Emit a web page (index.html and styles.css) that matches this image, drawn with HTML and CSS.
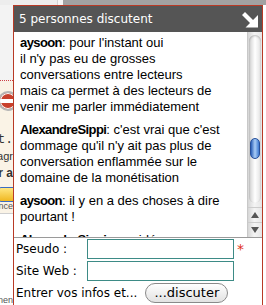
FILE: index.html
```html
<!DOCTYPE html>
<html lang="fr">
<head>
<meta charset="utf-8">
<title>Chat</title>
<link rel="stylesheet" href="styles.css">
</head>
<body>
<div class="page">
  <div class="top">
    <div class="top-light"></div>
    <div class="top-sep"></div>
    <div class="top-gray"></div>
  </div>
  <div class="side">
    <div class="side-top"></div>
    <div class="side-box">
      <div class="side-row logo-row"><span class="logo"></span></div>
      <div class="side-row mono">Net.</div>
      <div class="side-row small">magr</div>
      <div class="side-row strong">ur a</div>
      <div class="side-row btn-row"><span class="mini-btn"></span></div>
      <div class="side-row tiny">ance</div>
    </div>
    <div class="side-bottom"><span class="tiny">nen</span></div>
  </div>
</div>

<div class="widget">
  <div class="header">
    <span class="title">5 personnes discutent</span>
    <svg class="arrow" width="17" height="16" viewBox="0 0 17 16">
      <path d="M0 3 L3 0 L11 8 L16 3 L16 15.5 L3.5 15.5 L8 11 Z" fill="#fff"/>
    </svg>
  </div>
  <div class="body">
    <div class="messages">
      <p class="msg"><b>aysoon</b>: pour l'instant oui<br>il n'y pas eu de grosses<br>conversations entre lecteurs<br>mais ca permet à des lecteurs de<br>venir me parler immédiatement</p>
      <p class="msg"><b>AlexandreSippi</b>: c'est vrai que c'est<br>dommage qu'il n'y ait pas plus de<br>conversation enflammée sur le<br>domaine de la monétisation</p>
      <p class="msg"><b>aysoon</b>: il y en a des choses à dire<br>pourtant !</p>
      <p class="msg"><b>AlexandreSippi</b>: une idée comme ca :</p>
    </div>
    <div class="scrollbar">
      <div class="track">
        <div class="thumb"></div>
      </div>
      <div class="sb-btn up"><span class="tri-up"></span></div>
      <div class="sb-btn down"><span class="tri-down"></span></div>
    </div>
  </div>
  <form class="form">
    <label class="lbl" for="pseudo">Pseudo :</label>
    <input class="field" id="pseudo" type="text">
    <span class="req">*</span>
    <label class="lbl" for="site">Site Web :</label>
    <input class="field" id="site" type="text">
    <span></span>
    <div class="actions">
      <span class="hint">Entrer vos infos et...</span>
      <button class="btn" type="button">...discuter</button>
    </div>
  </form>
</div>
</body>
</html>
```

FILE: styles.css
```css
html, body {
  margin: 0;
  padding: 0;
}
body {
  width: 266px;
  height: 305px;
  overflow: hidden;
  position: relative;
  background: #ffffff;
  font-family: "Liberation Sans", Arial, sans-serif;
}

/* background page */
.page {
  display: flex;
  flex-direction: column;
  height: 305px;
}
.top {
  display: flex;
  height: 5px;
}
.top-light { width: 57px; background: #ededed; }
.top-sep { width: 6px; background: #f6f6f6; border-left: 1px solid #d4d4d4; box-sizing: border-box; }
.top-gray { flex: 1; background: #a2a2a2; }

.side {
  width: 13px;
  flex: 1;
  display: flex;
  flex-direction: column;
  overflow: hidden;
}
.side-top {
  height: 75px;
  background: #f3f3f3;
  border-bottom: 1px dotted #d04040;
}
.side-box {
  height: 132px;
  background: #faf3e6;
  border-bottom: 1px solid #cfcfcf;
  display: flex;
  flex-direction: column;
}
.side-row {
  display: flex;
  justify-content: flex-end;
  white-space: nowrap;
  font-size: 11px;
  color: #333;
}
.logo-row { height: 51px; align-items: flex-start; }
.logo {
  flex: none;
  width: 16px;
  height: 16px;
  margin-top: 10px;
  border-radius: 50%;
  border: 2px solid #b5b5b5;
  box-shadow: inset 0 0 0 1px #ffffff;
  background: linear-gradient(#c8402c 0 6px, #ffffff 6px 10px, #c8402c 10px);
  margin-right: -5px;
}
.mono { font-family: "Liberation Mono", monospace; font-size: 13px; height: 16px; line-height: 16px; }
.small { height: 17px; line-height: 17px; font-size: 11px; }
.strong { font-weight: bold; font-size: 12px; height: 16px; line-height: 16px; }
.btn-row { height: 20px; }
.mini-btn {
  flex: none;
  width: 16px;
  height: 13px;
  margin-right: -3px;
  margin-top: 6px;
  border-radius: 3px;
  border: 1px solid #3c6cc0;
  background: linear-gradient(#ffe680, #f0b820);
}
.tiny { font-size: 9px; height: 10px; line-height: 10px; color: #555; }
.side-bottom {
  flex: 1;
  display: flex;
  justify-content: flex-end;
  align-items: flex-end;
}

/* widget */
.widget {
  position: absolute;
  left: 13px;
  top: 5px;
  width: 248px;
  height: 310px;
  border: 1px solid #b83a26;
  background: #ffffff;
  display: flex;
  flex-direction: column;
}
.header {
  height: 26px;
  flex: none;
  background: #555555;
  color: #ffffff;
  display: flex;
  align-items: center;
  justify-content: space-between;
  padding: 0 3px 0 5px;
}
.title {
  font-family: "DejaVu Sans", Verdana, sans-serif;
  font-size: 12px;
}
.arrow { display: block; margin-top: 1px; }

.body {
  height: 205px;
  flex: none;
  display: flex;
}
.messages {
  flex: 1;
  overflow: hidden;
  padding: 3px 0 0 6px;
  font-size: 13px;
  line-height: 16px;
  color: #000;
}
.msg { margin: 0 0 7px; white-space: nowrap; }
.msg b { letter-spacing: -0.6px; }

.scrollbar {
  width: 15px;
  flex: none;
  display: flex;
  flex-direction: column;
  background: linear-gradient(to right, #d6d6d6, #f4f4f4 45%, #e6e6e6);
  border-left: 1px solid #c8c8c8;
  box-sizing: border-box;
}
.track {
  flex: 1;
  margin: 3px 1px 4px;
  border-radius: 7px;
  background: linear-gradient(to right, #cfcfcf, #ffffff 50%, #e2e2e2);
  box-shadow: inset 0 1px 2px rgba(0,0,0,0.25);
  padding-top: 103px;
}
.thumb {
  height: 21px;
  margin: 0 1px;
  border-radius: 6px;
  background: linear-gradient(to right, #2a5fb8, #a9cdf7 50%, #3c78d0);
  border: 1px solid #27509a;
  box-sizing: border-box;
}
.sb-btn {
  height: 14px;
  display: flex;
  align-items: center;
  justify-content: center;
  border-top: 1px solid #cccccc;
}
.tri-up {
  width: 0; height: 0;
  border-left: 4px solid transparent;
  border-right: 4px solid transparent;
  border-bottom: 6px solid #555;
}
.tri-down {
  width: 0; height: 0;
  border-left: 4px solid transparent;
  border-right: 4px solid transparent;
  border-top: 6px solid #555;
}

.form {
  margin: 0;
  border-top: 1px solid #9a9a9a;
  padding: 1px 0 0 2px;
  display: grid;
  grid-template-columns: 71px 147px auto;
  grid-auto-rows: 20px;
  row-gap: 2px;
  align-items: center;
  font-family: "DejaVu Sans", Verdana, sans-serif;
  font-size: 12px;
  color: #000;
}
.field {
  box-sizing: border-box;
  width: 147px;
  height: 20px;
  margin: 0;
  padding: 0 2px;
  border: 1px solid #3d8b86;
  background: #fff;
  font: inherit;
}
.req {
  color: #e03020;
  font-size: 14px;
  padding-left: 3px;
  line-height: 14px;
}
.actions {
  grid-column: 1 / -1;
  display: flex;
  align-items: center;
  gap: 8px;
}
.btn {
  height: 20px;
  width: 83px;
  padding: 0;
  border: 1px solid #8a8a8a;
  border-radius: 10px;
  background: linear-gradient(#ffffff, #f0f0f0 50%, #e2e2e2);
  font-family: "DejaVu Sans", Verdana, sans-serif;
  font-size: 13px;
  color: #000;
  line-height: 18px;
}
```
